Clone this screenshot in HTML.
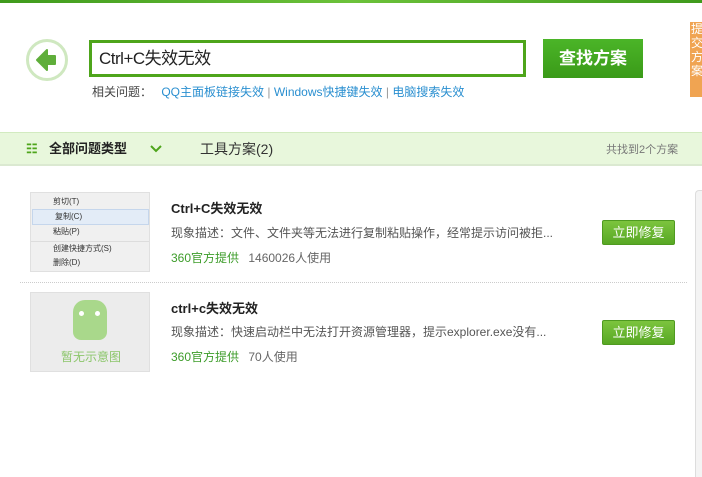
<!DOCTYPE html>
<html><head><meta charset="utf-8"><style>
*{margin:0;padding:0;box-sizing:border-box}
body{width:702px;height:477px;overflow:hidden;background:#fff;font-family:"Liberation Sans","Noto Sans CJK SC",sans-serif;position:relative;font-size:12px;color:#333}
.a{position:absolute}
</style></head><body>
<div class="a" style="left:0;top:0;width:702px;height:3px;background:linear-gradient(90deg,#3f9a1c,#6cc23a,#3f9a1c)"></div>
<div class="a" style="left:26px;top:39px;width:42px;height:42px;border-radius:50%;border:3px solid #cfe8c0;background:#fff"></div>
<svg class="a" style="left:35px;top:48px" width="24" height="24" viewBox="0 0 24 24"><path d="M2 12 L12 2 L12 8 L20 8 L20 16 L12 16 L12 22 Z" fill="#5fae3a" stroke="#5fae3a" stroke-width="2" stroke-linejoin="round"/></svg>
<div class="a" style="left:89px;top:40px;width:437px;height:37px;border:3px solid #4ea51b;font-size:17px;line-height:31px;padding-left:7px;color:#222;letter-spacing:-0.5px">Ctrl+C失效无效</div>
<div class="a" style="left:543px;top:39px;width:100px;height:39px;background:linear-gradient(#4bb528,#3a9a18);color:#fff;font-size:17px;font-weight:bold;text-align:center;line-height:39px">查找方案</div>
<div class="a" style="left:92px;top:84px;font-size:12px;line-height:16px;color:#444">相关问题： <span style="color:#2a8fd0;margin-left:6px">QQ主面板链接失效</span> <span style="color:#999">|</span> <span style="color:#2a8fd0">Windows快捷键失效</span> <span style="color:#999">|</span> <span style="color:#2a8fd0">电脑搜索失效</span></div>
<div class="a" style="left:690px;top:22px;width:12px;height:75px;background:#f0a452;color:#fff;font-size:12px;line-height:14px;padding-left:1px;overflow:hidden">提交方案</div>
<div class="a" style="left:0;top:132px;width:702px;height:34px;background:#e8f7dc;border-top:1px solid #d2ebc0;border-bottom:2px solid #dbe9d1"></div>
<div class="a" style="left:26px;top:142px;color:#4ea51b;font-size:13px;line-height:14px;font-weight:bold">☷</div>
<div class="a" style="left:49px;top:141px;font-size:13px;font-weight:bold;color:#222;line-height:16px">全部问题类型</div>
<svg class="a" style="left:150px;top:145px" width="12" height="8"><path d="M1 1 L6 6 L11 1" stroke="#4ea51b" stroke-width="2" fill="none"/></svg>
<div class="a" style="left:200px;top:141px;font-size:14px;color:#333;line-height:16px">工具方案(2)</div>
<div class="a" style="left:606px;top:143px;font-size:11px;color:#777;line-height:14px">共找到2个方案</div>
<div class="a" style="left:695px;top:190px;width:7px;height:287px;border-left:1px solid #ddd;border-top:1px solid #ddd;border-radius:4px 0 0 0;background:#f4f4f4"></div>
<div class="a" style="left:30px;top:192px;width:120px;height:80px;background:#f0f0f0;border:1px solid #e0e0e0;font-size:8px;color:#333;line-height:14px">
<div style="padding-left:22px;margin-top:2px">剪切(T)</div>
<div style="padding-left:22px;background:#e3ecf7;border:1px solid #c5d6ec;margin-left:1px">复制(C)</div>
<div style="padding-left:22px">粘贴(P)</div>
<div style="padding-left:22px;border-top:1px solid #ddd;margin-top:2px">创建快捷方式(S)</div>
<div style="padding-left:22px">删除(D)</div></div>
<div class="a" style="left:30px;top:292px;width:120px;height:80px;background:#ececec;border:1px solid #e0e0e0"></div>
<div class="a" style="left:73px;top:300px;width:34px;height:40px;background:#a9d88b;border-radius:12px 12px 8px 8px"></div>
<div class="a" style="left:79px;top:311px;width:5px;height:5px;border-radius:50%;background:#fff"></div>
<div class="a" style="left:95px;top:311px;width:5px;height:5px;border-radius:50%;background:#fff"></div>
<div class="a" style="left:61px;top:348px;font-size:12px;color:#8cc66b">暂无示意图</div>
<div class="a" style="left:171px;top:198px;font-size:13px;font-weight:bold;color:#222">Ctrl+C失效无效</div>
<div class="a" style="left:171px;top:224px;font-size:12px;color:#555">现象描述：文件、文件夹等无法进行复制粘贴操作，经常提示访问被拒...</div>
<div class="a" style="left:171px;top:249px;font-size:12px;color:#3d9c2a">360官方提供 <span style="color:#666;margin-left:6px">1460026人使用</span></div>
<div class="a" style="left:20px;top:282px;width:667px;border-top:1px dotted #ccc"></div>
<div class="a" style="left:171px;top:298px;font-size:13px;font-weight:bold;color:#222">ctrl+c失效无效</div>
<div class="a" style="left:171px;top:323px;font-size:12px;color:#555">现象描述：快速启动栏中无法打开资源管理器，提示explorer.exe没有...</div>
<div class="a" style="left:171px;top:348px;font-size:12px;color:#3d9c2a">360官方提供 <span style="color:#666;margin-left:6px">70人使用</span></div>
<div class="a" style="left:602px;top:220px;width:73px;height:25px;background:linear-gradient(#7cc43e,#58a824);border:1px solid #4f9a20;border-radius:2px;color:#fff;font-size:13px;text-align:center;line-height:23px">立即修复</div>
<div class="a" style="left:602px;top:320px;width:73px;height:25px;background:linear-gradient(#7cc43e,#58a824);border:1px solid #4f9a20;border-radius:2px;color:#fff;font-size:13px;text-align:center;line-height:23px">立即修复</div>
</body></html>
